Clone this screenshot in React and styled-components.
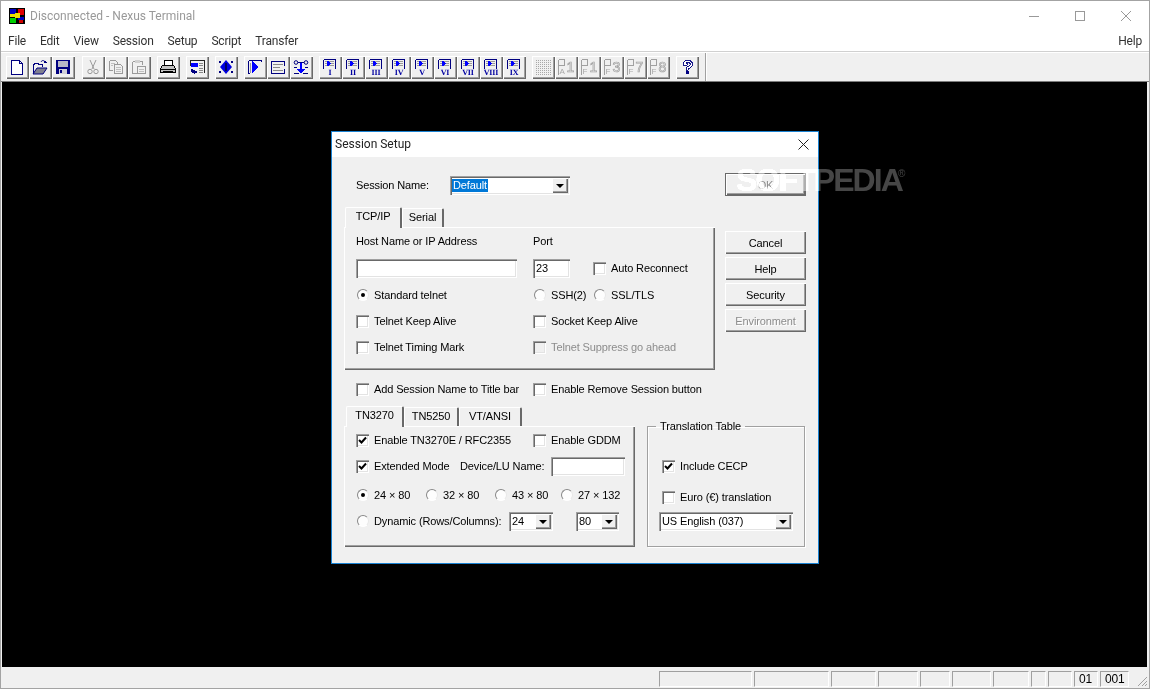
import React from "react";
import styled, { createGlobalStyle } from "styled-components";

const Global = createGlobalStyle`
  html, body { margin: 0; padding: 0; width: 1150px; height: 689px; overflow: hidden; background: #f0f0f0; }
  * { box-sizing: border-box; }
`;

const Win = styled.div`
  position: relative; width: 1150px; height: 689px; display: flex; flex-direction: column;
  background: #f0f0f0; border: 1px solid #a3a3a3;
  font-family: "Liberation Sans", Arial, sans-serif; font-size: 11px; letter-spacing: -0.12px; color: #000; isolation: isolate;
`;
const TitleBar = styled.div`
  height: 30px; flex: none; background: #fff; display: flex; align-items: center; padding-left: 8px;
  font-family: Roboto, "Noto Sans", sans-serif; font-size: 12px; letter-spacing: 0; color: #999;
`;
const TitleText = styled.span` margin-left: 5px; margin-top: -1px; flex: 1; `;
const Caption = styled.div` width: 46px; height: 30px; display: flex; align-items: center; justify-content: center; `;
const MenuBar = styled.div`
  height: 20px; flex: none; background: #fff; display: flex; align-items: center;
  font-family: Roboto, "Noto Sans", sans-serif; font-size: 12px; letter-spacing: -0.2px; color: #333;
`;
const MenuItem = styled.span` padding: 0 7px; white-space: nowrap; margin-left: ${p => p.$auto ? "auto" : "0"}; `;
const Toolbar = styled.div`
  height: 31px; flex: none; background: #f0f0f0; display: flex; align-items: center; padding: 1px 0 0 5px;
  border-top: 1px solid #d0d0d0; box-shadow: inset 0 1px 0 #fff; border-bottom: 1px solid #7c7c7c;
`;
const ToolGroup = styled.div` display: flex; margin-right: ${p => p.$mr || 6}px; `;
const ToolSep = styled.div` width: 2px; height: 28px; background: #a0a0a0; border-right: 1px solid #fff; `;
const ToolBtn = styled.div`
  width: 23px; height: 23px; background: #f0f0f0; display: flex; align-items: center; justify-content: center;
  box-shadow: inset 1px 1px 0 #fff, inset -1px -1px 0 #696969, inset -2px -2px 0 #a0a0a0;
  padding: 0 1px 1px 0;
`;
const Workspace = styled.div` flex: 1; background: #000; margin: 0 2px 0 1px; position: relative; `;
const Status = styled.div`
  height: 21px; flex: none; background: #f0f0f0; display: flex; align-items: flex-end; justify-content: flex-end;
  gap: 2px; position: relative;
`;
const Cell = styled.div`
  width: ${p => p.$w}px; height: 16px; margin-right: ${p => p.$mr || 0}px; border-top: 1px solid #a0a0a0; border-left: 1px solid #a0a0a0;
  border-bottom: 1px solid #fff; border-right: 1px solid #fff; display: flex; align-items: center; padding-left: 4px;
  margin-bottom: 1px; font-size: 12px;
`;
const Grip = styled.svg` position: absolute; right: 1px; bottom: 1px; `;

const Dialog = styled.div`
  position: absolute; left: 329px; top: 49px; width: 488px; height: 433px; background: #f0f0f0;
  border: 1px solid #1a82d2; display: flex; flex-direction: column;
`;
const DlgTitle = styled.div`
  height: 25px; flex: none; background: #fff; display: flex; align-items: center; justify-content: space-between;
  padding: 0 9px 1px 3px; font-family: Roboto, "Noto Sans", sans-serif; font-size: 12px; letter-spacing: 0; color: #222;
`;
const DlgBody = styled.div` flex: 1; padding: 15px 13px 0 12px; display: flex; flex-direction: column; `;
const TopArea = styled.div` display: flex; gap: 10px; `;
const LeftCol = styled.div` width: 371px; display: flex; flex-direction: column; `;
const RightCol = styled.div` width: 81px; display: flex; flex-direction: column; `;
const NameRow = styled.div` height: 24px; margin-top: 1px; display: flex; align-items: center; padding-left: 12px; `;
const NameLabel = styled.span` width: 94px; `;
const Tabs = styled.div`
  display: flex; align-items: flex-end; height: 21px; margin-top: ${p => p.$mt}px; padding-left: ${p => p.$pl || 1}px;
  position: relative; z-index: 1;
`;
const Tab = styled.div`
  width: ${p => p.$w}px; height: ${p => p.$active ? 21 : 19}px; margin-bottom: ${p => p.$active ? -1 : 0}px; background: #f0f0f0;
  display: flex; align-items: center; justify-content: center; padding-bottom: ${p => p.$active ? 5 : 2}px;
  border-top: 1px solid #fff; border-left: 1px solid #fff; border-right: 2px solid #696969;
  border-radius: 2px 2px 0 0;
`;
const Panel = styled.div`
  width: ${p => p.$w}px; height: ${p => p.$h}px; background: #f0f0f0; display: grid; grid-template-rows: ${p => p.$rows};
  padding: ${p => p.$pt}px 0 0 12px; align-content: start;
  box-shadow: inset 1px 1px 0 #fff, inset -1px -1px 0 #696969, inset -2px -2px 0 #a0a0a0;
`;
const Row = styled.div` display: grid; grid-template-columns: ${p => p.$cols}; align-items: center; white-space: nowrap; `;
const ItemWrap = styled.label` display: flex; align-items: center; white-space: nowrap; color: ${p => p.$off ? "#8c8c8c" : "#000"}; `;
const Box = styled.span`
  width: 13px; height: 13px; flex: none; margin: 0 5px 0 0; background: ${p => p.$off ? "#f0f0f0" : "#fff"};
  display: flex; align-items: center; justify-content: center;
  box-shadow: inset 1px 1px 0 #a0a0a0, inset 2px 2px 0 #696969, inset -1px -1px 0 #fff, inset -2px -2px 0 #e3e3e3;
`;
const RadioDot = styled.span`
  width: 12px; height: 12px; flex: none; margin: 0 5px 0 1px; border-radius: 50%; background: #fdfdfd;
  border: 1px solid; border-color: #888 #e8e8e8 #fff #888; display: flex; align-items: center; justify-content: center;
  &::after { content: ""; width: 4px; height: 4px; border-radius: 50%; background: ${p => p.$on ? "#000" : "transparent"}; }
`;
const Input = styled.div`
  width: ${p => p.$w}px; height: 19px; background: #fff; display: flex; align-items: center; padding-left: 3px;
  box-shadow: inset 1px 1px 0 #a0a0a0, inset 2px 2px 0 #696969, inset -1px -1px 0 #fff, inset -2px -2px 0 #e3e3e3;
`;
const ComboBox = styled.div`
  width: ${p => p.$w}px; height: 19px; background: #fff; display: flex; align-items: center; padding: 2px 2px 2px 1px; justify-content: space-between;
  box-shadow: inset 1px 1px 0 #a0a0a0, inset 2px 2px 0 #696969, inset -1px -1px 0 #fff, inset -2px -2px 0 #e3e3e3;
`;
const ComboText = styled.span`
  padding: 0 1px; margin-left: 1px; line-height: 13px; background: ${p => p.$sel ? "#0078d7" : "transparent"}; color: ${p => p.$sel ? "#fff" : "#000"};
`;
const ArrowBtn = styled.span`
  width: 16px; height: 15px; background: #f0f0f0; display: flex; align-items: center; justify-content: center;
  box-shadow: inset 1px 1px 0 #fff, inset -1px -1px 0 #696969, inset -2px -2px 0 #a0a0a0;
  &::after { content: ""; border-left: 4px solid transparent; border-right: 4px solid transparent; border-top: 4px solid #000; margin-top: 1px; }
`;
const Btn = styled.div`
  width: 81px; height: 23px; background: #f0f0f0; display: flex; align-items: center; justify-content: center;
  margin-top: ${p => p.$mt || 3}px; color: ${p => p.$off ? "#8c8c8c" : "#000"};
  text-shadow: ${p => p.$off ? "1px 1px 0 #fff" : "none"};
  box-shadow: ${p => p.$def
    ? "inset 0 0 0 1px #696969, inset 1px 1px 0 1px #fff, inset -2px -2px 0 0 #696969, inset -3px -3px 0 0 #a0a0a0"
    : "inset 1px 1px 0 #fff, inset -1px -1px 0 #696969, inset -2px -2px 0 #a0a0a0"};
`;
const OptionsRow = styled.div`
  height: 26px; margin-top: 6px; display: grid; grid-template-columns: 177px 1fr; padding-left: 12px; align-items: center;
`;
const BottomArea = styled.div` display: flex; gap: 12px; align-items: flex-start; `;
const BottomLeft = styled.div` display: flex; flex-direction: column; `;
const Group = styled.fieldset`
  width: 158px; height: 127px; margin: 18px 0 0 0; padding: 0 0 0 11px; border: 1px solid #a0a0a0;
  box-shadow: 1px 1px 0 #fff, inset 1px 1px 0 #fff; display: flex; flex-direction: column; min-width: 0;
`;
const Legend = styled.legend` padding: 0 4px; margin-left: -3px; `;
const GroupRow = styled.div` height: ${p => p.$h}px; display: flex; align-items: center; margin-top: ${p => p.$mt || 0}px; margin-left: 3px; `;
const Watermark = styled.div`
  position: absolute; left: 735px; top: 161px; font-family: "Liberation Sans", Arial, sans-serif; font-weight: 700; font-size: 32px;
  letter-spacing: -1.9px; color: rgb(70,70,70); mix-blend-mode: plus-lighter; pointer-events: none; line-height: 36px; white-space: nowrap;
`;
const Reg = styled.sup` font-size: 10px; font-weight: 400; position: relative; top: -14px; letter-spacing: 0; margin-left: -4px; vertical-align: baseline; `;

const Check = ({ on, off, children }) => (
  <ItemWrap $off={off}>
    <Box $off={off}>
      {on && <svg width="9" height="9" viewBox="0 0 9 9"><path d="M1 4 L3.5 6.5 L8 1.5" fill="none" stroke="#000" strokeWidth="2" /></svg>}
    </Box>
    {children}
  </ItemWrap>
);
const Radio = ({ on, children }) => <ItemWrap><RadioDot $on={on} />{children}</ItemWrap>;
const Combo = ({ w, sel, children }) => (
  <ComboBox $w={w}><ComboText $sel={sel}>{children}</ComboText><ArrowBtn /></ComboBox>
);

const Ico = ({ children }) => (
  <svg width="16" height="16" viewBox="0 0 16 16" shapeRendering="crispEdges">{children}</svg>
);
const NAVY = "#000080";
const BLUE = "#0000ff";
const G = "#9a9a9a";

const SheetIcon = ({ num }) => (
  <Ico>
    <path d="M1.5 .5H13.5V10M1.5 .5V10" fill="none" stroke={NAVY} />
    <path d="M3 2h9v1H3zM3 4h9v1H3zM3 6h9v1H3z" fill="#999" />
    <path d="M5 2h2v1h1v1h1v1H8v1H7v1H5z" fill={BLUE} />
    <text x="8" y="15.5" fontFamily="Liberation Serif" fontWeight="700" fontSize="8" textAnchor="middle" fill="#0000a0" textRendering="geometricPrecision">{num}</text>
  </Ico>
);
const KeyIcon = ({ top, sub }) => (
  <svg width="18" height="18" viewBox="0 0 18 18">
    <path d="M1.5 1.5H7.5V7.5H1.5M1.5 1.5V16.5" fill="none" stroke="#a0a0a0" strokeWidth="1" shapeRendering="crispEdges" />
    <text x="2.5" y="16" fontFamily="Liberation Sans" fontSize="8" fill="#a8a8a8">{top}</text>
    <text x="9.5" y="14" fontFamily="Liberation Sans" fontSize="14" fill="#f0f0f0" stroke="#a0a0a0" strokeWidth=".7">{sub}</text>
  </svg>
);

const icons = {
  newDoc: <Ico><path d="M3.5 1.5H10.5L13.5 4.5V15.5H2.5V1.5zM10.5 1.5V4.5H13.5" fill="#fff" stroke={NAVY} /></Ico>,
  open: <Ico>
    <path d="M1.5 14.5V5.5H2.5V4.5H6.5V5.5H10.5V8" fill="none" stroke={NAVY} />
    <path d="M1 15L5 9H15L11 15z" fill="#808090" stroke={NAVY} strokeWidth="1" shapeRendering="auto" />
    <path d="M9 3C10 1 12 1 13.5 3.5" fill="none" stroke={NAVY} shapeRendering="auto" />
    <path d="M12 4h3v-1h-1v-1h-2z" fill={NAVY} />
  </Ico>,
  save: <Ico>
    <rect x="1" y="1" width="14" height="14" fill={NAVY} />
    <rect x="3" y="2" width="10" height="6" fill="#b8b8c8" />
    <rect x="4" y="10" width="8" height="5" fill="#d0d0d8" />
    <rect x="5" y="11" width="2" height="3" fill={NAVY} />
  </Ico>,
  cut: <Ico>
    <path d="M5 1L9 10M11 1L7 10" stroke={G} fill="none" shapeRendering="auto" />
    <circle cx="5" cy="12.5" r="2.2" fill="none" stroke={G} shapeRendering="auto" />
    <circle cx="11" cy="12.5" r="2.2" fill="none" stroke={G} shapeRendering="auto" />
  </Ico>,
  copy: <Ico>
    <path d="M1.5 1.5H7.5L9.5 3.5V5M1.5 1.5V11.5H5" fill="#f0f0f0" stroke={G} />
    <path d="M6.5 5.5H12.5L14.5 7.5V14.5H6.5z" fill="#f0f0f0" stroke={G} />
    <path d="M8 8h5v1H8zM8 10h5v1H8zM8 12h5v1H8zM3 4h4v1H3zM3 6h2v1H3z" fill="#c0c0c0" />
  </Ico>,
  paste: <Ico>
    <path d="M1.5 2.5H11.5V6M1.5 2.5V14.5H6" fill="#f0f0f0" stroke={G} />
    <path d="M4 1h5v3H4z" fill="#d0d0d0" />
    <path d="M6.5 7.5H14.5V14.5H6.5z" fill="#f0f0f0" stroke={G} />
    <path d="M8 10h5v1H8zM8 12h5v1H8z" fill="#c0c0c0" />
  </Ico>,
  print: <Ico>
    <path d="M4.5 1.5H12.5V6.5H4.5z" fill="#fff" stroke="#000" />
    <path d="M2.5 6.5H13.5L15.5 9.5V13.5H.5V9.5z" fill="#c0c0c0" stroke="#000" />
    <path d="M1 10h14v1H1zM3 12h10v1H3z" fill="#000" />
    <path d="M3 14h10v1H3z" fill="#fff" />
  </Ico>,
  capture: <Ico>
    <path d="M.5 1.5H15.5V14" fill="none" stroke="#222" />
    <path d="M1 1h1v6H1z" fill="#222" />
    <rect x="2" y="4" width="7" height="4" fill={BLUE} />
    <path d="M10 4h4v1h-4zM10 6h4v1h-4zM10 9h4v1h-4zM10 11h4v1h-4zM10 13h4v1h-4z" fill="#888" />
    <path d="M2 10h2v1h2v1h2v2H6v1H5v-1H3v-1H2z" fill={NAVY} />
  </Ico>,
  link: <Ico>
    <path d="M8 1l6 7-6 7-6-7z" fill="#0000e0" stroke="none" shapeRendering="auto" />
    <path d="M7 4h2v8H7z" fill="#000060" />
    <path d="M1 2h2v2H1zM13 2h2v2h-2zM1 12h2v2H1zM13 12h2v2h-2z" fill={NAVY} />
  </Ico>,
  play: <Ico>
    <path d="M1.5 1.5H14.5V3M1.5 1.5V14.5H3" fill="none" stroke={NAVY} />
    <path d="M5 2h1v1h1v1h1v1h1v1h1v1h1v2h-1v1H9v1H8v1H7v1H6v1H5z" fill={BLUE} />
    <path d="M3 4h1v10H3z" fill="#999" />
  </Ico>,
  lines: <Ico>
    <path d="M1.5 2.5H14.5V14.5H1.5z" fill="none" stroke={NAVY} />
    <path d="M3 5h10v1H3zM3 8h7v1H3zM3 11h10v1H3z" fill="#888" />
    <rect x="11" y="7" width="4" height="3" fill="#f0f0f0" />
  </Ico>,
  xfer: <Ico>
    <path d="M1 3h14v1H1z" fill={NAVY} />
    <circle cx="3" cy="3.5" r="1.8" fill="#f0f0f0" stroke={NAVY} shapeRendering="auto" />
    <circle cx="13" cy="3.5" r="1.8" fill="#f0f0f0" stroke={NAVY} shapeRendering="auto" />
    <path d="M7 4h2v6h3v1h-1v1h-1v1H9v1H7v-1H6v-1H5v-1H4v-1h3z" fill={BLUE} />
    <path d="M1 8h3v1H1zM12 8h3v1h-3zM1 14h5v1H1zM10 14h5v1h-5z" fill={NAVY} />
  </Ico>,
  dots: <svg width="16" height="16" viewBox="0 0 16 16" shapeRendering="crispEdges">
    {Array.from({ length: 64 }, (_, i) => <rect key={i} x={1 + (i % 8) * 2} y={1 + Math.floor(i / 8) * 2} width="1" height="1" fill="#a8a8a8" />)}
  </svg>,
  help: <Ico>
    <path d="M4 3h1V2h1V1h5v1h1v1h1v4h-1v1h-1v1h-2v2H7V8h1V7h2V6h1V4h-1V3H7v1h1v2H4z" fill="#fff" stroke={NAVY} strokeWidth=".9" />
    <path d="M7 12h3v3H7z" fill={NAVY} />
  </Ico>,
};

const numerals = ["I", "II", "III", "IV", "V", "VI", "VII", "VIII", "IX"];
const keys = [["A", "1"], ["F", "1"], ["F", "3"], ["F", "7"], ["F", "8"]];
const cells = [93, 75, 45, 40, 30, 39, 36, 15, 24, 24, 29];

export default function App() {
  return (
    <>
      <Global />
      <Win>
        <TitleBar>
          <svg width="16" height="16" viewBox="0 0 16 16" shapeRendering="crispEdges">
            <rect width="16" height="16" fill="#000" />
            <rect x="1" y="1" width="6" height="5" fill="#0000c0" />
            <rect x="9" y="1" width="6" height="6" fill="#e00000" />
            <rect x="1" y="10" width="6" height="5" fill="#00d000" />
            <rect x="9" y="9" width="6" height="3" fill="#0000c0" />
            <rect x="1" y="6" width="5" height="3" fill="#e8e000" />
            <rect x="6" y="5" width="5" height="5" fill="#f0e000" />
            <rect x="10" y="12" width="4" height="3" fill="#d00000" />
          </svg>
          <TitleText>Disconnected - Nexus Terminal</TitleText>
          <Caption>
            <svg width="10" height="10" viewBox="0 0 10 10" shapeRendering="crispEdges"><rect y="5" width="10" height="1" fill="#999" /></svg>
          </Caption>
          <Caption>
            <svg width="10" height="10" viewBox="0 0 10 10" shapeRendering="crispEdges"><rect x=".5" y=".5" width="9" height="9" fill="none" stroke="#999" /></svg>
          </Caption>
          <Caption>
            <svg width="10" height="10" viewBox="0 0 10 10"><path d="M0 0L10 10M10 0L0 10" stroke="#999" strokeWidth="1" /></svg>
          </Caption>
        </TitleBar>
        <MenuBar>
          {["File", "Edit", "View", "Session", "Setup", "Script", "Transfer"].map(m => <MenuItem key={m}>{m}</MenuItem>)}
          <MenuItem $auto>Help</MenuItem>
        </MenuBar>
        <Toolbar>
          <ToolGroup $mr={7}>{["newDoc", "open", "save"].map(k => <ToolBtn key={k}>{icons[k]}</ToolBtn>)}</ToolGroup>
          <ToolGroup>{["cut", "copy", "paste"].map(k => <ToolBtn key={k}>{icons[k]}</ToolBtn>)}</ToolGroup>
          <ToolGroup><ToolBtn>{icons.print}</ToolBtn></ToolGroup>
          <ToolGroup><ToolBtn>{icons.capture}</ToolBtn></ToolGroup>
          <ToolGroup><ToolBtn>{icons.link}</ToolBtn></ToolGroup>
          <ToolGroup>{["play", "lines", "xfer"].map(k => <ToolBtn key={k}>{icons[k]}</ToolBtn>)}</ToolGroup>
          <ToolGroup>{numerals.map(n => <ToolBtn key={n}><SheetIcon num={n} /></ToolBtn>)}</ToolGroup>
          <ToolGroup>
            <ToolBtn>{icons.dots}</ToolBtn>
            {keys.map(([a, b], i) => <ToolBtn key={i}><KeyIcon top={a} sub={b} /></ToolBtn>)}
          </ToolGroup>
          <ToolGroup><ToolBtn>{icons.help}</ToolBtn></ToolGroup>
          <ToolSep />
        </Toolbar>
        <Workspace>
          <Dialog>
            <DlgTitle>
              Session Setup
              <svg width="11" height="11" viewBox="0 0 11 11"><path d="M.5 .5L10.5 10.5M10.5 .5L.5 10.5" stroke="#222" strokeWidth="1" /></svg>
            </DlgTitle>
            <DlgBody>
              <TopArea>
                <LeftCol>
                  <NameRow>
                    <NameLabel>Session Name:</NameLabel>
                    <Combo w={120} sel>Default</Combo>
                  </NameRow>
                  <Tabs $mt={9}>
                    <Tab $active $w={57}>TCP/IP</Tab>
                    <Tab $w={42}>Serial</Tab>
                  </Tabs>
                  <Panel $w={371} $h={143} $pt={0} $rows="28px 26px 28px 24px 28px">
                    <Row $cols="177px 1fr"><span>Host Name or IP Address</span><span>Port</span></Row>
                    <Row $cols="177px 60px 1fr">
                      <Input $w={161} />
                      <Input $w={37}>23</Input>
                      <Check>Auto Reconnect</Check>
                    </Row>
                    <Row $cols="177px 60px 1fr">
                      <Radio on>Standard telnet</Radio>
                      <Radio>SSH(2)</Radio>
                      <Radio>SSL/TLS</Radio>
                    </Row>
                    <Row $cols="177px 1fr"><Check>Telnet Keep Alive</Check><Check>Socket Keep Alive</Check></Row>
                    <Row $cols="177px 1fr"><Check>Telnet Timing Mark</Check><Check off>Telnet Suppress go ahead</Check></Row>
                  </Panel>
                </LeftCol>
                <RightCol>
                  <Btn $def $off $mt={1}>OK</Btn>
                  <Btn $mt={35}>Cancel</Btn>
                  <Btn>Help</Btn>
                  <Btn>Security</Btn>
                  <Btn $off>Environment</Btn>
                </RightCol>
              </TopArea>
              <OptionsRow>
                <Check>Add Session Name to Title bar</Check>
                <Check>Enable Remove Session button</Check>
              </OptionsRow>
              <BottomArea>
                <BottomLeft>
                  <Tabs $mt={3} $pl={2}>
                    <Tab $active $w={58}>TN3270</Tab>
                    <Tab $w={55}>TN5250</Tab>
                    <Tab $w={63}>VT/ANSI</Tab>
                  </Tabs>
                  <Panel $w={291} $h={121} $pt={2} $rows="24px 28px 30px 22px">
                    <Row $cols="177px 1fr"><Check on>Enable TN3270E / RFC2355</Check><Check>Enable GDDM</Check></Row>
                    <Row $cols="104px 91px 1fr">
                      <Check on>Extended Mode</Check>
                      <span>Device/LU Name:</span>
                      <Input $w={74} />
                    </Row>
                    <Row $cols="69px 69px 66px 1fr">
                      <Radio on>24 × 80</Radio>
                      <Radio>32 × 80</Radio>
                      <Radio>43 × 80</Radio>
                      <Radio>27 × 132</Radio>
                    </Row>
                    <Row $cols="153px 67px 1fr">
                      <Radio>Dynamic (Rows/Columns):</Radio>
                      <Combo w={44}>24</Combo>
                      <Combo w={43}>80</Combo>
                    </Row>
                  </Panel>
                </BottomLeft>
                <Group>
                  <Legend>Translation Table</Legend>
                  <GroupRow $h={30} $mt={19}><Check on>Include CECP</Check></GroupRow>
                  <GroupRow $h={30} $mt={1}><Check>Euro (€) translation</Check></GroupRow>
                  <Combo w={134}>US English (037)</Combo>
                </Group>
              </BottomArea>
            </DlgBody>
          </Dialog>
        </Workspace>
        <Status>
          {cells.map((w, i) => (
            <Cell key={i} $w={w} $mr={i === cells.length - 1 ? 20 : 0}>
              {i === 9 ? "01" : i === 10 ? "001" : ""}
            </Cell>
          ))}
          <Grip width="12" height="12" viewBox="0 0 12 12">
            <path d="M11 2L2 11M11 6L6 11M11 9L9 11" stroke="#a0a0a0" fill="none" />
          </Grip>
        </Status>
        <Watermark>SOFTPEDIA<Reg>®</Reg></Watermark>
      </Win>
    </>
  );
}
